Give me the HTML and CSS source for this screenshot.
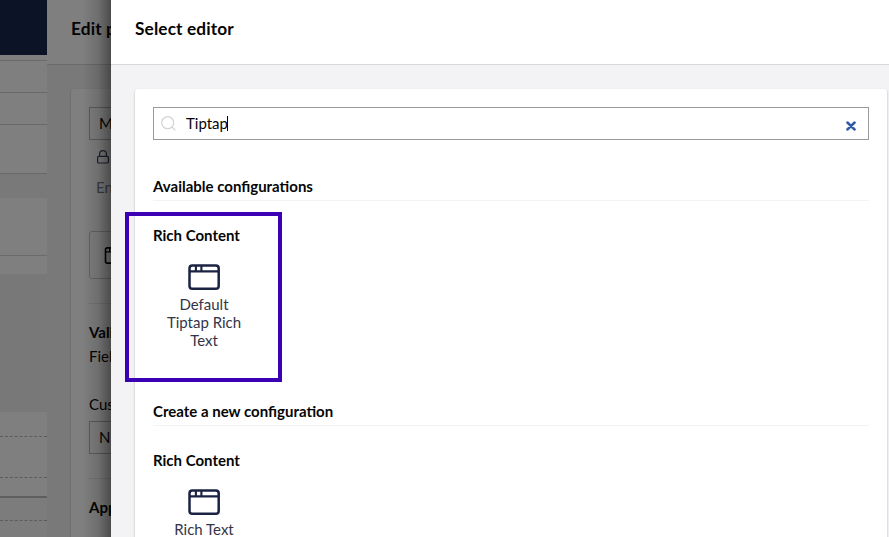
FILE: index.html
```html
<!DOCTYPE html>
<html lang="en">
<head>
<meta charset="utf-8">
<title>Select editor</title>
<link rel="stylesheet" href="styles.css">
</head>
<body>
<svg class="defs" width="0" height="0">
  <symbol id="window" viewBox="0 0 32 26">
    <g fill="none" stroke="currentColor"><rect x="1.5" y="1.4" width="29.2" height="23.3" rx="2.8" stroke-width="2.5"/><path d="M1 7.4H31M7.9 1V7.4M13.4 1V7.4" stroke-width="2.1"/></g>
  </symbol>
</svg>
<div class="app">
  <div class="workspace dimmed">
    <div class="topbar"></div>
    <div class="gap"></div>
    <div class="row"></div>
    <div class="row"></div>
    <div class="row tall"></div>
    <div class="spacer"></div>
    <div class="box"></div>
    <div class="box-end"></div>
    <div class="canvas"></div>
    <div class="group first"></div>
    <div class="group second"></div>
    <div class="group last"></div>
    <div class="group next"></div>
    <div class="rest"></div>
  </div>
  <div class="panel property dimmed">
    <header class="head">Edit p</header>
    <div class="content">
      <div class="card">
        <div class="field">M</div>
        <div class="alias"><svg width="12" height="14" viewBox="0 0 12 14"><g fill="none" stroke="#3c4360" stroke-width="1.2"><rect x=".6" y="6.4" width="10.8" height="6.6" rx="1"/><path d="M2.6 6.4V4a3.4 3.4 0 0 1 6.8 0v2.4"/></g></svg></div>
        <div class="description">En</div>
        <div class="picker"><svg width="22" height="17"><use href="#window"/></svg></div>
        <hr>
        <div class="label validation">Vali</div>
        <div class="text">Fiel</div>
        <div class="text custom">Cus</div>
        <div class="field select">N</div>
        <hr class="second-rule">
        <div class="label appearance">App</div>
      </div>
    </div>
  </div>
  <main class="panel picker-panel">
    <header class="head">Select editor</header>
    <div class="content">
      <div class="card">
        <div class="search">
          <svg width="15" height="15" viewBox="0 0 15 15" fill="none" stroke="#d4d4d6" stroke-width="1.3"><circle cx="6.7" cy="6.7" r="6"/><path d="M11 11l3.4 3.4"/></svg>
          <span class="query">Tiptap</span><i class="caret"></i>
          <svg class="clear" width="10" height="10" viewBox="0 0 10 10" stroke="#315ca5" stroke-width="2.5" stroke-linecap="round"><path d="M1.4 1.5L8.6 8.5M8.6 1.5L1.4 8.5"/></svg>
        </div>
        <section class="available">
          <h2>Available configurations</h2>
          <h3>Rich Content</h3>
          <div class="item"><svg width="32" height="26"><use href="#window"/></svg><span>Default<br>Tiptap Rich<br>Text</span></div>
        </section>
        <section>
          <h2>Create a new configuration</h2>
          <h3>Rich Content</h3>
          <div class="item"><svg width="32" height="26"><use href="#window"/></svg><span>Rich Text</span></div>
        </section>
      </div>
    </div>
  </main>
</div>
<div class="highlight"></div>
</body>
</html>
```
FILE: styles.css
```css
* { box-sizing: border-box; }
body { margin: 0; overflow: hidden; font: 15px/18px Lato, sans-serif; color: #060606; }
.defs { position: absolute; }
svg { display: block; }
.app { display: flex; width: 889px; height: 537px; }

/* Layers below the active panel */
.dimmed { position: relative; overflow: hidden; }
.dimmed::after { content: ""; position: absolute; inset: 0; background: rgba(0, 0, 0, .5); }

.workspace { flex: 0 0 47px; background: #fff; }
.topbar { height: 55px; background: #1b264f; }
.gap { height: 6px; border-bottom: 1px solid #d4d4d6; }
.row { height: 32px; border-bottom: 1px solid #d0d0d2; }
.row.tall { height: 49px; }
.spacer { height: 24px; background: #f3f3f5; }
.box { height: 58px; border-bottom: 1px solid #d8d7d9; }
.box-end { height: 18px; }
.canvas { height: 138px; background: #f0f0f0; }
.group { border-bottom: 1px dashed #b8b8ba; }
.group.first { height: 25px; }
.group.second { height: 41px; }
.group.last { height: 20px; border-bottom: 2px solid #bcbcbe; }
.group.next { height: 23px; background: #f8f8f8; }
.rest { height: 20px; background: #f8f8f8; }

.panel { display: flex; flex-direction: column; background: #f3f3f5; }
.head { flex: 0 0 65px; padding: 19px 24px 0; background: #fff; border-bottom: 1px solid #d8d7d9; font-size: 17.25px; line-height: 20px; font-weight: 700; letter-spacing: .13px; white-space: nowrap; }
.content { flex: 1; padding: 24px 2px 0 24px; min-height: 0; }
.card { height: 460px; padding: 18px; background: #fff; border-radius: 3px; box-shadow: 0 1px 2px rgba(0, 0, 0, .32); }

.property { flex: 0 0 64px; }
.property::after { background: linear-gradient(90deg, rgba(0, 0, 0, .5) 55%, rgba(0, 0, 0, .57) 80%, rgba(0, 0, 0, .7)); }
.property .head { padding-right: 0; }
.property .card { width: 300px; }
.field { height: 33px; padding: 6px 9px; border: 1px solid #b8b8ba; }
.alias { height: 29px; padding: 10px 8px; }
.description { height: 34px; padding: 9px 7px; color: #777b91; }
.picker { height: 48px; margin-top: 28px; padding: 15px 14px; border: 1px solid #c8c8ca; border-radius: 3px; }
hr { height: 1px; margin: 24px 0 0; border: 0; background: #e9e9eb; }
.label { font-weight: 700; height: 24px; }
.validation { margin-top: 19px; }
.custom { margin-top: 30px; }
.select { margin-top: 8px; }
.second-rule { margin-top: 24px; }
.appearance { margin-top: 19px; }

.picker-panel { flex: 1; min-width: 0; position: relative; overflow: hidden; }
.search { display: flex; align-items: center; height: 33px; padding: 0 12px 0 7px; border: 1px solid #9a9a9c; }
.query { margin: 0 -1px 2px 10px; }
.caret { width: 1px; height: 15px; background: #000; }
.clear { margin: 5px 0 0 auto; }
section { height: 225px; }
.available { margin-top: 36px; }
h2, h3 { margin: 0; font-size: 15px; line-height: 20px; font-weight: 700; }
h2 { height: 25px; border-bottom: 1px solid #f3f3f5; }
h3 { margin-top: 24px; }
.item { display: flex; flex-direction: column; align-items: center; width: 102px; margin-top: 19px; text-align: center; }
.item svg { color: #1b2342; }
.item span { margin-top: 5px; color: #343548; }

/* Callout frame around the matching result */
.highlight { position: absolute; left: 125px; top: 212px; width: 157px; height: 170px; border: 4px solid #3b00b3; }
```
